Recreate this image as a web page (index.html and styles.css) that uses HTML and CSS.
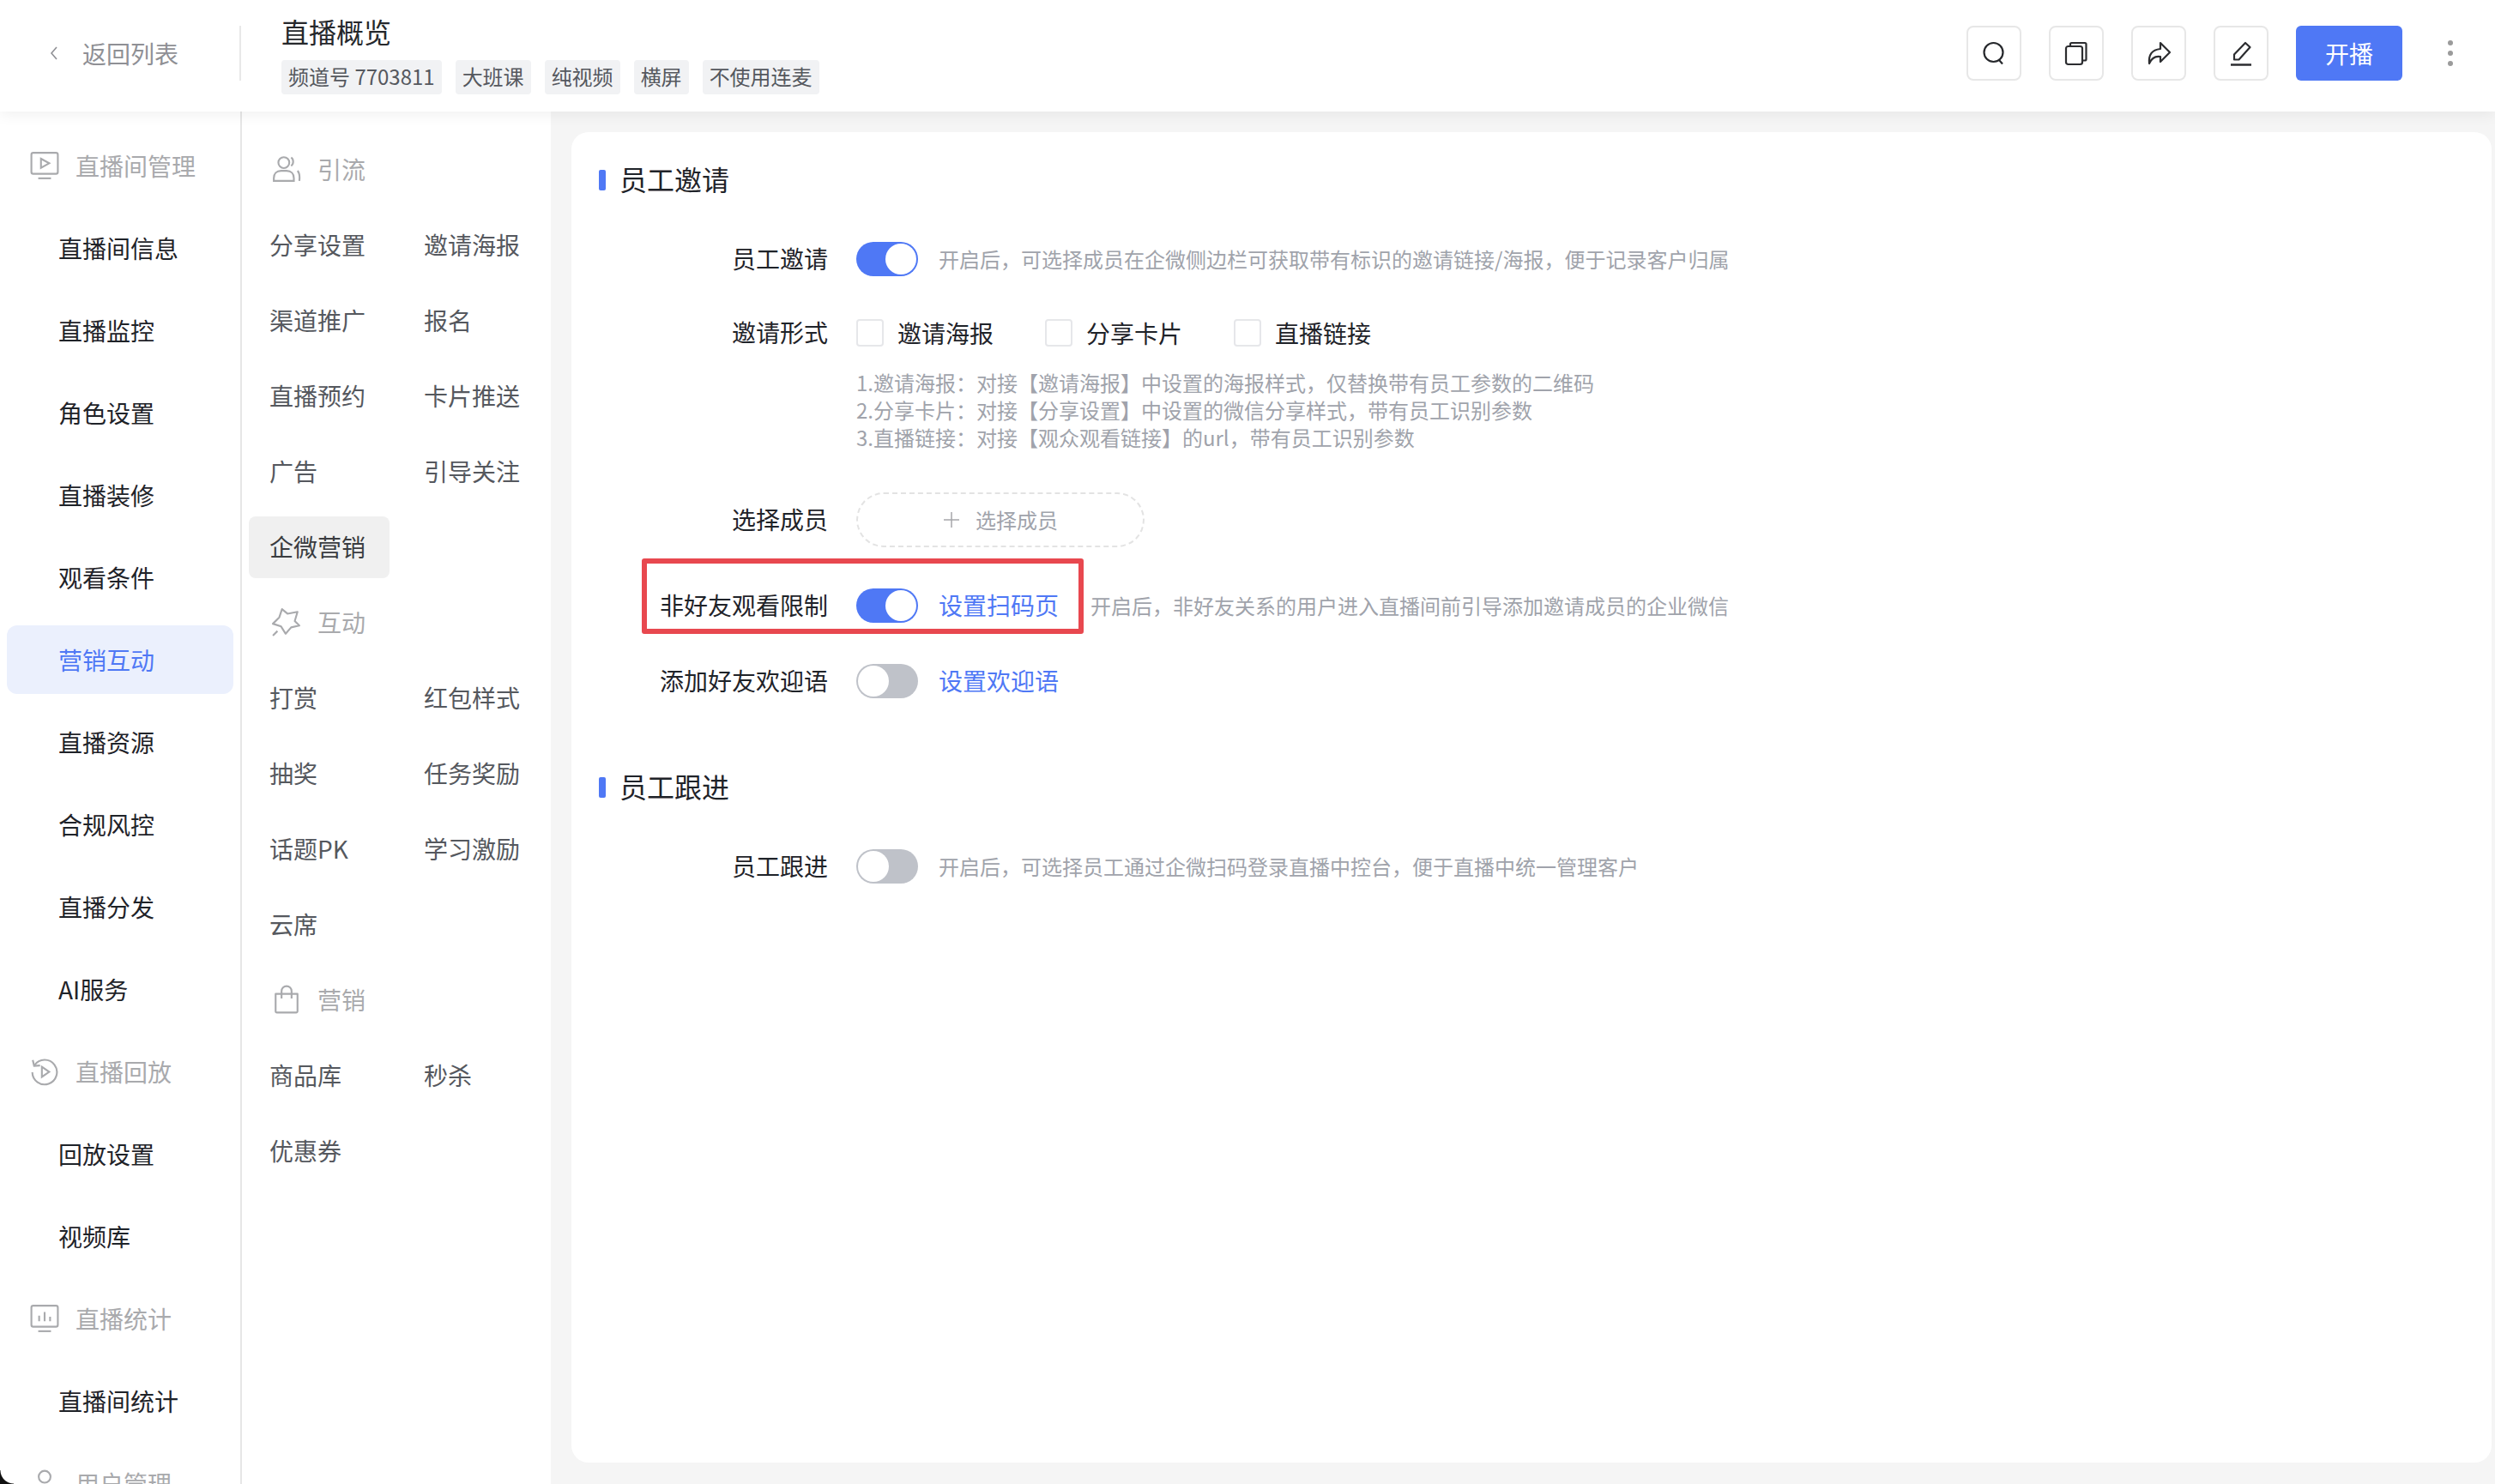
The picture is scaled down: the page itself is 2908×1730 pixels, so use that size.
FILE: index.html
```html
<!DOCTYPE html>
<html lang="zh-CN">
<head>
<meta charset="utf-8">
<title>直播概览</title>
<link rel="stylesheet" href="styles.css">
</head>
<body>
<div class="app">
  <header class="header">
    <a class="back">
      <svg class="back-icon" viewBox="0 0 12 16" fill="none" stroke="#8f9095" stroke-width="1.6"><path d="M9 1 3 8l6 7"/></svg>
      <span>返回列表</span>
    </a>
    <div class="divider"></div>
    <div class="title-block">
      <h1 class="title">直播概览</h1>
      <div class="tags">
        <span class="tag">频道号 7703811</span>
        <span class="tag">大班课</span>
        <span class="tag">纯视频</span>
        <span class="tag">横屏</span>
        <span class="tag">不使用连麦</span>
      </div>
    </div>
    <div class="actions">
      <button class="icon-btn"><svg viewBox="0 0 32 32" fill="none" stroke="#26282c" stroke-width="2.2"><circle cx="15.500" cy="15" r="11"/><path d="m22 24 4 4.500"/></svg></button>
      <button class="icon-btn"><svg viewBox="0 0 32 32" fill="none" stroke="#2c2d30" stroke-width="2.2" stroke-linejoin="round"><rect x="4" y="8" width="19" height="21" rx="2.5"/><path d="M9 8V5.500A1.500 1.500 0 0 1 10.500 4H26a1.500 1.500 0 0 1 1.500 1.500V23a1.500 1.500 0 0 1-1.500 1.500h-3"/></svg></button>
      <button class="icon-btn"><svg viewBox="0 0 32 32" fill="none" stroke="#2c2d30" stroke-width="2.200" stroke-linejoin="round"><path d="M18 4 29 15 18 26v-6c-6-1-10 1-13 8-1-10 3-16 13-17z"/></svg></button>
      <button class="icon-btn"><svg viewBox="0 0 32 32" fill="none" stroke="#2c2d30" stroke-width="2.200" stroke-linejoin="round"><path d="m21 4 5.500 5-13 14.500H8v-6z"/><path d="M4 29.500h24" stroke-width="2.500"/></svg></button>
      <button class="start-btn">开播</button>
      <div class="more"><i></i><i></i><i></i></div>
    </div>
  </header>
  <div class="body">
    <nav class="side">
      <div class="side-head">
        <svg viewBox="0 0 32 32" fill="none" stroke="#a9aaad" stroke-width="2"><rect x="1.500" y="2" width="29" height="23" rx="2"/><path d="m12 8.500 9 5-9 5z"/><path d="M9 30h14"/></svg>
        <span>直播间管理</span>
      </div>
      <a class="side-item">直播间信息</a>
      <a class="side-item">直播监控</a>
      <a class="side-item">角色设置</a>
      <a class="side-item">直播装修</a>
      <a class="side-item">观看条件</a>
      <a class="side-item active">营销互动</a>
      <a class="side-item">直播资源</a>
      <a class="side-item">合规风控</a>
      <a class="side-item">直播分发</a>
      <a class="side-item">AI服务</a>
      <div class="side-head">
        <svg viewBox="0 0 32 32" fill="none" stroke="#a9aaad" stroke-width="2"><path d="M5 9A13.500 13.500 0 1 1 2.500 17"/><path d="M3 3.500 4.500 10l6.500-.5"/><path d="m13 11 8 5.500-8 5.500z"/></svg>
        <span>直播回放</span>
      </div>
      <a class="side-item">回放设置</a>
      <a class="side-item">视频库</a>
      <div class="side-head">
        <svg viewBox="0 0 32 32" fill="none" stroke="#a9aaad" stroke-width="2"><rect x="1.500" y="2" width="29" height="23" rx="2"/><path d="M10 13v6M16 9v10M22 14v5"/><path d="M9 30h14"/></svg>
        <span>直播统计</span>
      </div>
      <a class="side-item">直播间统计</a>
      <div class="side-head">
        <svg viewBox="0 0 32 32" fill="none" stroke="#a9aaad" stroke-width="2"><circle cx="16" cy="9" r="6.500"/><path d="M4 30c0-8 5-11 12-11s12 3 12 11"/></svg>
        <span>用户管理</span>
      </div>
    </nav>
    <aside class="sub">
      <div class="sub-head">
        <svg viewBox="0 0 32 32" fill="none" stroke="#a9aaad" stroke-width="2"><circle cx="13" cy="9" r="6"/><path d="M2 29v-3c0-5 3-8 8-8h6c5 0 8 3 8 8v3z"/><path d="M21 3.500c3 2 3 7 0 9M28 18c2 2 2.500 7 2 11"/></svg>
        <span>引流</span>
      </div>
      <a class="sub-item">分享设置</a><a class="sub-item">邀请海报</a>
      <a class="sub-item">渠道推广</a><a class="sub-item">报名</a>
      <a class="sub-item">直播预约</a><a class="sub-item">卡片推送</a>
      <a class="sub-item">广告</a><a class="sub-item">引导关注</a>
      <a class="sub-item selected">企微营销</a>
      <div class="sub-head">
        <svg viewBox="0 0 32 32" fill="none" stroke="#a9aaad" stroke-width="2" stroke-linejoin="round"><path d="m11 2 6 5 11-2-3 10 5 5-9 2-6 7-5-8-9-3 7-7z"/><path d="m1 31 5-5"/></svg>
        <span>互动</span>
      </div>
      <a class="sub-item">打赏</a><a class="sub-item">红包样式</a>
      <a class="sub-item">抽奖</a><a class="sub-item">任务奖励</a>
      <a class="sub-item">话题PK</a><a class="sub-item">学习激励</a>
      <a class="sub-item">云席</a>
      <div class="sub-head">
        <svg viewBox="0 0 32 32" fill="none" stroke="#a9aaad" stroke-width="2" stroke-linejoin="round"><path d="M4 10h24v19a1.500 1.500 0 0 1-1.500 1.500h-21A1.500 1.500 0 0 1 4 29z"/><path d="M10.500 15V7a5.500 5.500 0 0 1 11 0v8"/></svg>
        <span>营销</span>
      </div>
      <a class="sub-item">商品库</a><a class="sub-item">秒杀</a>
      <a class="sub-item">优惠券</a>
    </aside>
    <main class="main">
      <section class="card">
        <h2 class="sec-title">员工邀请</h2>
        <div class="row first-row">
          <label class="label">员工邀请</label>
          <span class="toggle on"></span>
          <span class="desc">开启后，可选择成员在企微侧边栏可获取带有标识的邀请链接/海报，便于记录客户归属</span>
        </div>
        <div class="row check-row">
          <label class="label">邀请形式</label>
          <div class="checks">
            <span class="check"><i></i>邀请海报</span>
            <span class="check"><i></i>分享卡片</span>
            <span class="check"><i></i>直播链接</span>
          </div>
        </div>
        <div class="tips">
          <p>1.邀请海报：对接【邀请海报】中设置的海报样式，仅替换带有员工参数的二维码</p>
          <p>2.分享卡片：对接【分享设置】中设置的微信分享样式，带有员工识别参数</p>
          <p>3.直播链接：对接【观众观看链接】的url，带有员工识别参数</p>
        </div>
        <div class="row member-row">
          <label class="label">选择成员</label>
          <button class="add-btn"><svg viewBox="0 0 20 20" stroke="#a6a7ab" stroke-width="1.500"><path d="M10 1v18M1 10h18"/></svg><span>选择成员</span></button>
        </div>
        <div class="row gap-row">
          <label class="label">非好友观看限制</label>
          <span class="toggle on"></span>
          <a class="link">设置扫码页</a>
          <span class="desc after-link">开启后，非好友关系的用户进入直播间前引导添加邀请成员的企业微信</span>
        </div>
        <div class="row gap-row">
          <label class="label">添加好友欢迎语</label>
          <span class="toggle"></span>
          <a class="link">设置欢迎语</a>
        </div>
        <h2 class="sec-title second">员工跟进</h2>
        <div class="row first-row">
          <label class="label">员工跟进</label>
          <span class="toggle"></span>
          <span class="desc">开启后，可选择员工通过企微扫码登录直播中控台，便于直播中统一管理客户</span>
        </div>
        <div class="highlight"></div>
      </section>
    </main>
  </div>
</div>
<div class="corner"></div>
</body>
</html>
```
FILE: styles.css
```css
* { box-sizing: border-box; }
html, body { margin: 0; height: 100%; }
body {
  position: relative;
  height: 1730px;
  overflow: hidden;
  font-family: "Noto Sans CJK SC", "Noto Sans", sans-serif;
  font-size: 28px;
  color: #1f2329;
  background: #fff;
}
p, h1, h2 { margin: 0; font-weight: 400; }
button { font-family: inherit; padding: 0; cursor: pointer; }
svg { display: block; flex: none; }

.app { display: flex; flex-direction: column; height: 1730px; }

/* header */
.header {
  position: relative;
  z-index: 2;
  flex: none;
  display: flex;
  height: 130px;
  background: #fff;
  box-shadow: 0 4px 16px rgba(0, 0, 0, .06);
}
.back {
  display: flex;
  align-items: center;
  gap: 27px;
  width: 279px;
  height: 124px;
  padding-left: 57px;
  color: #8f9095;
  line-height: 40px;
}
.back-icon { width: 12px; height: 16px; }
.divider { align-self: flex-start; margin-top: 30px; width: 2px; height: 64px; background: #e8e8e8; }
.title-block { margin-left: 47px; padding-top: 16px; }
.title { font-size: 32px; line-height: 40px; color: #26282c; }
.tags { display: flex; gap: 16px; margin-top: 14px; }
.tag {
  height: 40px;
  padding: 0 8px;
  border-radius: 4px;
  background: #f1f2f4;
  font-size: 24px;
  line-height: 38px;
  color: #55585e;
  white-space: nowrap;
}
.actions { display: flex; align-items: center; gap: 32px; margin-left: auto; height: 124px; }
.icon-btn {
  display: flex;
  align-items: center;
  justify-content: center;
  width: 64px;
  height: 64px;
  border: 2px solid #e7e7e7;
  border-radius: 8px;
  background: #fff;
}
.icon-btn svg { width: 32px; height: 32px; }
.start-btn {
  width: 124px;
  height: 64px;
  border: 0;
  border-radius: 6px;
  background: #4f78f5;
  color: #fff;
  font-size: 28px;
}
.more { display: flex; flex-direction: column; gap: 6px; width: 6px; margin-left: 21px; margin-right: 49px; }
.more i { width: 6px; height: 6px; border-radius: 50%; background: #9b9b9b; }

/* layout */
.body { flex: 1; display: flex; min-height: 0; }

/* first column */
.side {
  flex: none;
  width: 282px;
  display: flex;
  flex-direction: column;
  gap: 16px;
  padding: 23px 8px 0;
  border-right: 2px solid #e6e6e6;
  background: #fff;
}
.side-head, .side-item {
  flex: none;
  display: flex;
  align-items: center;
  height: 80px;
  border-radius: 12px;
}
.side-head { gap: 19px; padding-left: 27px; color: #a9aaad; }
.side-head svg { width: 34px; height: 34px; }
.side-item { padding-left: 60px; color: #1f2329; }
.side-item.active { background: #ebf0fd; color: #4f78f5; }

/* second column */
.sub {
  flex: none;
  width: 360px;
  display: grid;
  grid-template-columns: 164px 164px;
  grid-auto-rows: 72px;
  align-content: start;
  gap: 16px;
  padding: 32px 0 0 8px;
  background: #fff;
}
.sub-head {
  grid-column: 1 / -1;
  display: flex;
  align-items: center;
  gap: 19px;
  padding: 0 0 2px 27px;
  color: #a9aaad;
}
.sub-head svg { width: 34px; height: 34px; }
.sub-item {
  display: flex;
  align-items: center;
  padding: 0 0 2px 24px;
  border-radius: 8px;
  color: #55585e;
}
.sub-item.selected { grid-column: 1; background: #f0f0f0; color: #3a3c40; }

/* main */
.main { flex: 1; padding: 24px 4px 25px 24px; background: #f5f5f5; }
.card { position: relative; height: 100%; padding: 36px 32px 0; border-radius: 20px; background: #fff; }
.sec-title {
  display: flex;
  align-items: center;
  gap: 16px;
  height: 40px;
  padding-bottom: 5px;
  font-size: 32px;
  line-height: 40px;
  color: #1f2329;
}
.sec-title::before { content: ""; width: 8px; height: 24px; margin-top: 5px; border-radius: 2px; background: #4f78f5; }
.sec-title.second { margin-top: 84px; }

.row { display: flex; align-items: center; height: 40px; }
.first-row { margin-top: 52px; }
.check-row { margin-top: 46px; }
.member-row { margin-top: 48px; height: 64px; }
.gap-row { margin-top: 48px; }
.label { flex: none; width: 267px; margin-right: 33px; padding-bottom: 2px; text-align: right; white-space: nowrap; }
.toggle {
  position: relative;
  flex: none;
  width: 72px;
  height: 40px;
  margin-right: 24px;
  border-radius: 20px;
  background: #bfc2c9;
}
.toggle::after {
  content: "";
  position: absolute;
  top: 2px;
  left: 2px;
  width: 36px;
  height: 36px;
  border-radius: 50%;
  background: #fff;
}
.toggle.on { background: #4f78f5; }
.toggle.on::after { left: 34px; }
.desc { padding-bottom: 2px; font-size: 24px; color: #a0a3ab; white-space: nowrap; }
.desc.after-link { margin-left: 37px; }
.link { padding-bottom: 2px; color: #4f78f5; white-space: nowrap; }
.checks { display: flex; gap: 60px; }
.check { display: flex; align-items: center; gap: 16px; white-space: nowrap; }
.check i { width: 32px; height: 32px; border: 2px solid #e6e7ea; border-radius: 4px; background: #fff; }
.tips { margin: 22px 0 0 300px; font-size: 24px; line-height: 32px; color: #a0a3ab; white-space: nowrap; }
.add-btn {
  display: flex;
  align-items: center;
  justify-content: center;
  gap: 18px;
  width: 336px;
  height: 64px;
  border: 2px dashed #e3e3e3;
  border-radius: 32px;
  background: #fff;
  color: #a0a3ab;
  font-size: 24px;
}
.add-btn span { padding-bottom: 2px; }
.add-btn svg { width: 20px; height: 20px; }

.highlight {
  position: absolute;
  left: 82px;
  top: 497px;
  width: 515px;
  height: 88px;
  border: 6px solid #e8484f;
  border-radius: 3px;
  pointer-events: none;
}

.corner {
  position: absolute;
  left: 0;
  bottom: 0;
  width: 16px;
  height: 16px;
  background: radial-gradient(circle at 100% 0, transparent 15px, #111 16px);
  z-index: 3;
}
```
